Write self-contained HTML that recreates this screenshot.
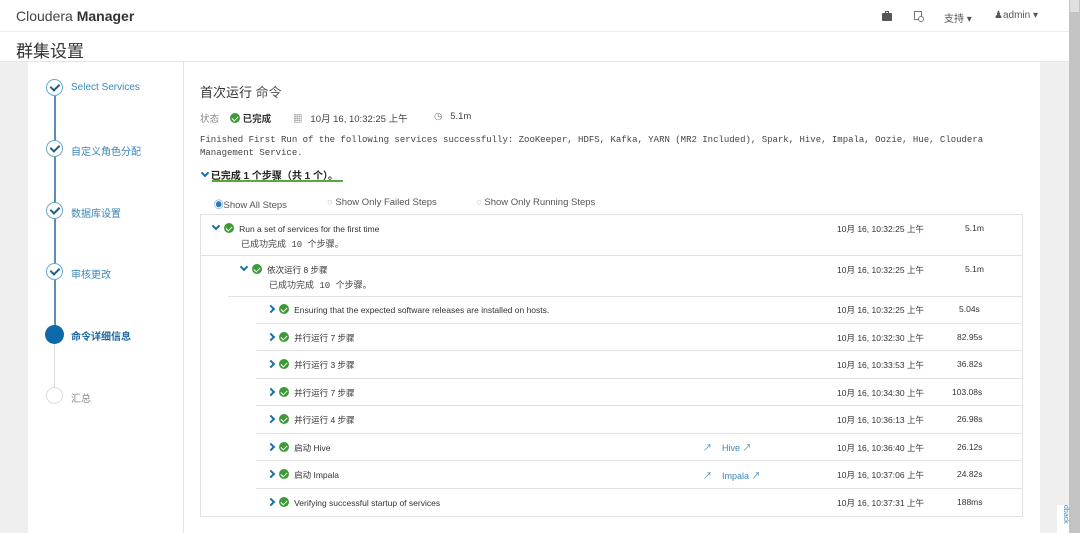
<!DOCTYPE html>
<html><head><meta charset="utf-8"><style>
*{margin:0;padding:0;box-sizing:border-box}
body{width:1080px;height:533px;overflow:hidden;background:#efefef;font-family:"Liberation Sans","Noto Sans CJK SC",sans-serif;color:#333;position:relative}
.a{position:absolute;white-space:nowrap}
.chk{display:inline-block;width:10px;height:10px;border-radius:50%;background:#3c9a37;position:relative;vertical-align:-1px;margin-left:3px}
.chk:after{content:"";position:absolute;left:3px;top:2px;width:3px;height:5px;border:solid #fff;border-width:0 1.5px 1.5px 0;transform:rotate(45deg)}
.dn{display:inline-block;width:6px;height:6px;border:solid #1a6fa8;border-width:0 2px 2px 0;transform:rotate(45deg);vertical-align:3px}
.rt{display:inline-block;width:6px;height:6px;border:solid #1a6fa8;border-width:0 2px 2px 0;transform:rotate(-45deg);vertical-align:1px}
.step{position:absolute;left:46px;width:17px;height:17px;border-radius:50%;border:1.5px solid #6aa7cc;background:#fff}
.step:after{content:"";position:absolute;left:5px;top:2px;width:4px;height:7px;border:solid #1a5f8e;border-width:0 2px 2px 0;transform:rotate(45deg)}
.sl{position:absolute;left:71px;font-size:10px;color:#3a85b8}
.hl{position:absolute;height:1px;background:#e2e2e2}
.t{font-size:8.5px;color:#333}
.m{font-family:"Liberation Mono","Noto Sans CJK SC",monospace;font-size:9px;color:#444}
.ext{color:#3a85b8;font-size:9px}
</style></head><body>
<div class="a" style="left:0;top:0;width:1069px;height:61px;background:#fff"></div>
<div class="hl" style="left:0;top:31px;width:1069px;background:#ececec"></div>
<div class="hl" style="left:0;top:61px;width:1069px;background:#e6e6e6"></div>
<div class="a" style="left:16px;top:8px;font-size:14px;color:#444">Cloudera <b style="color:#333">Manager</b></div>
<div class="a" style="left:16px;top:37px;font-size:17px;color:#333">群集设置</div>
<div class="a" style="left:882px;top:13px;width:10px;height:8px;background:#555;border-radius:1px"></div>
<div class="a" style="left:885px;top:11px;width:4px;height:3px;border:1px solid #555;border-bottom:none"></div>
<div class="a" style="left:914px;top:11px;width:8px;height:9px;border:1px solid #777"></div>
<div class="a" style="left:918px;top:16px;width:6px;height:6px;border:1px solid #777;border-radius:50%;background:#fff"></div>
<div class="a" style="left:944px;top:10px;font-size:10px;color:#555">支持 ▾</div>
<div class="a" style="left:994px;top:10px;font-size:10px;color:#555">&#9823;admin ▾</div>
<div class="a" style="left:1069px;top:0;width:11px;height:533px;background:#c3c3c3"></div>
<div class="a" style="left:1070px;top:0;width:9px;height:12px;background:#e0e0e0"></div>
<div class="a" style="left:28px;top:62px;width:155px;height:471px;background:#fff"></div>
<div class="a" style="left:183px;top:62px;width:1px;height:471px;background:#e6e6e6"></div>
<div class="a" style="left:184px;top:62px;width:856px;height:471px;background:#fff"></div>
<div class="a" style="left:1057px;top:505px;width:12px;height:28px;background:#fff;font-size:7px;color:#3a85b8;writing-mode:vertical-rl">dback</div>
<!-- sidebar -->
<div class="a" style="left:54px;top:96px;width:1.5px;height:238px;background:#5a8fb5"></div>
<div class="a" style="left:54px;top:334px;width:1px;height:60px;background:#ddd"></div>
<div class="step" style="top:79px"></div><div class="sl" style="top:82px">Select Services</div>
<div class="step" style="top:140px"></div><div class="sl" style="top:143px">自定义角色分配</div>
<div class="step" style="top:202px"></div><div class="sl" style="top:205px">数据库设置</div>
<div class="step" style="top:263px"></div><div class="sl" style="top:266px">审核更改</div>
<div class="a" style="left:45px;top:325px;width:19px;height:19px;border-radius:50%;background:#0d6aa8"></div><div class="sl" style="top:328px;font-weight:bold;color:#1d6aa0">命令详细信息</div>
<div class="a" style="left:46px;top:387px;width:17px;height:17px;border-radius:50%;border:1.5px solid #ddd;background:#fff"></div><div class="sl" style="top:390px;color:#888">汇总</div>
<!-- main -->
<div class="a" style="left:200px;top:82px;font-size:13px;color:#333">首次运行 <span style="color:#555">命令</span></div>
<div class="a" style="left:200px;top:111px;font-size:9.5px;color:#888">状态 &nbsp; <span class="chk"></span> <b style="color:#333">已完成</b></div>
<div class="a" style="left:293px;top:111px;font-size:9.5px;color:#444"><span style="color:#777">▦</span> &nbsp; 10月 16, 10:32:25 上午</div>
<div class="a" style="left:434px;top:111px;font-size:9.5px;color:#444"><span style="color:#777">◷</span> &nbsp; 5.1m</div>
<div class="a m" style="left:200px;top:134px;line-height:13px">Finished First Run of the following services successfully: ZooKeeper, HDFS, Kafka, YARN (MR2 Included), Spark, Hive, Impala, Oozie, Hue, Cloudera<br>Management Service.</div>
<div class="a" style="left:202px;top:167px;font-size:10px;font-weight:bold;color:#222"><span class="dn"></span> 已完成 1 个步骤（共 1 个）。</div>
<div class="a" style="left:212px;top:180px;width:131px;height:1.5px;background:#5aa83a"></div>
<div class="a" style="left:214px;top:197px;font-size:9.5px;color:#555"><span style="color:#2a7ac0">◉</span>Show All Steps</div>
<div class="a" style="left:327px;top:197px;font-size:9.5px;color:#555"><span style="color:#bbb">○</span> Show Only Failed Steps</div>
<div class="a" style="left:476px;top:197px;font-size:9.5px;color:#555"><span style="color:#bbb">○</span> Show Only Running Steps</div>
<div class="a" style="left:200px;top:214px;width:823px;height:303px;border:1px solid #e2e2e2"></div>
<div class="hl" style="left:200px;top:255px;width:823px"></div>
<div class="hl" style="left:228px;top:296px;width:795px"></div>
<div class="hl" style="left:256px;top:323px;width:767px"></div>
<div class="hl" style="left:256px;top:350px;width:767px"></div>
<div class="hl" style="left:256px;top:378px;width:767px"></div>
<div class="hl" style="left:256px;top:405px;width:767px"></div>
<div class="hl" style="left:256px;top:433px;width:767px"></div>
<div class="hl" style="left:256px;top:460px;width:767px"></div>
<div class="hl" style="left:256px;top:488px;width:767px"></div>
<div class="a t" style="left:213px;top:223px"><span class="dn"></span> <span class="chk"></span>&nbsp; Run a set of services for the first time</div>
<div class="a m" style="left:241px;top:237px">已成功完成 10 个步骤。</div>
<div class="a t" style="left:241px;top:264px"><span class="dn"></span> <span class="chk"></span>&nbsp; 依次运行 8 步骤</div>
<div class="a m" style="left:269px;top:278px">已成功完成 10 个步骤。</div>
<div class="a t" style="left:268px;top:304px"><span class="rt"></span> <span class="chk"></span>&nbsp; Ensuring that the expected software releases are installed on hosts.</div>
<div class="a t" style="left:268px;top:332px"><span class="rt"></span> <span class="chk"></span>&nbsp; 并行运行 7 步骤</div>
<div class="a t" style="left:268px;top:359px"><span class="rt"></span> <span class="chk"></span>&nbsp; 并行运行 3 步骤</div>
<div class="a t" style="left:268px;top:387px"><span class="rt"></span> <span class="chk"></span>&nbsp; 并行运行 7 步骤</div>
<div class="a t" style="left:268px;top:414px"><span class="rt"></span> <span class="chk"></span>&nbsp; 并行运行 4 步骤</div>
<div class="a t" style="left:268px;top:442px"><span class="rt"></span> <span class="chk"></span>&nbsp; 启动 Hive</div>
<div class="a t" style="left:268px;top:469px"><span class="rt"></span> <span class="chk"></span>&nbsp; 启动 Impala</div>
<div class="a t" style="left:268px;top:497px"><span class="rt"></span> <span class="chk"></span>&nbsp; Verifying successful startup of services</div>
<div class="a ext" style="left:703px;top:441px">↗ &nbsp;&nbsp; Hive ↗</div>
<div class="a ext" style="left:703px;top:469px">↗ &nbsp;&nbsp; Impala ↗</div>
<div class="a t" style="left:837px;top:223px">10月 16, 10:32:25 上午</div><div class="a t" style="left:965px;top:223px">5.1m</div>
<div class="a t" style="left:837px;top:264px">10月 16, 10:32:25 上午</div><div class="a t" style="left:965px;top:264px">5.1m</div>
<div class="a t" style="left:837px;top:304px">10月 16, 10:32:25 上午</div><div class="a t" style="left:959px;top:304px">5.04s</div>
<div class="a t" style="left:837px;top:332px">10月 16, 10:32:30 上午</div><div class="a t" style="left:957px;top:332px">82.95s</div>
<div class="a t" style="left:837px;top:359px">10月 16, 10:33:53 上午</div><div class="a t" style="left:957px;top:359px">36.82s</div>
<div class="a t" style="left:837px;top:387px">10月 16, 10:34:30 上午</div><div class="a t" style="left:952px;top:387px">103.08s</div>
<div class="a t" style="left:837px;top:414px">10月 16, 10:36:13 上午</div><div class="a t" style="left:957px;top:414px">26.98s</div>
<div class="a t" style="left:837px;top:442px">10月 16, 10:36:40 上午</div><div class="a t" style="left:957px;top:442px">26.12s</div>
<div class="a t" style="left:837px;top:469px">10月 16, 10:37:06 上午</div><div class="a t" style="left:957px;top:469px">24.82s</div>
<div class="a t" style="left:837px;top:497px">10月 16, 10:37:31 上午</div><div class="a t" style="left:957px;top:497px">188ms</div>
</body></html>
